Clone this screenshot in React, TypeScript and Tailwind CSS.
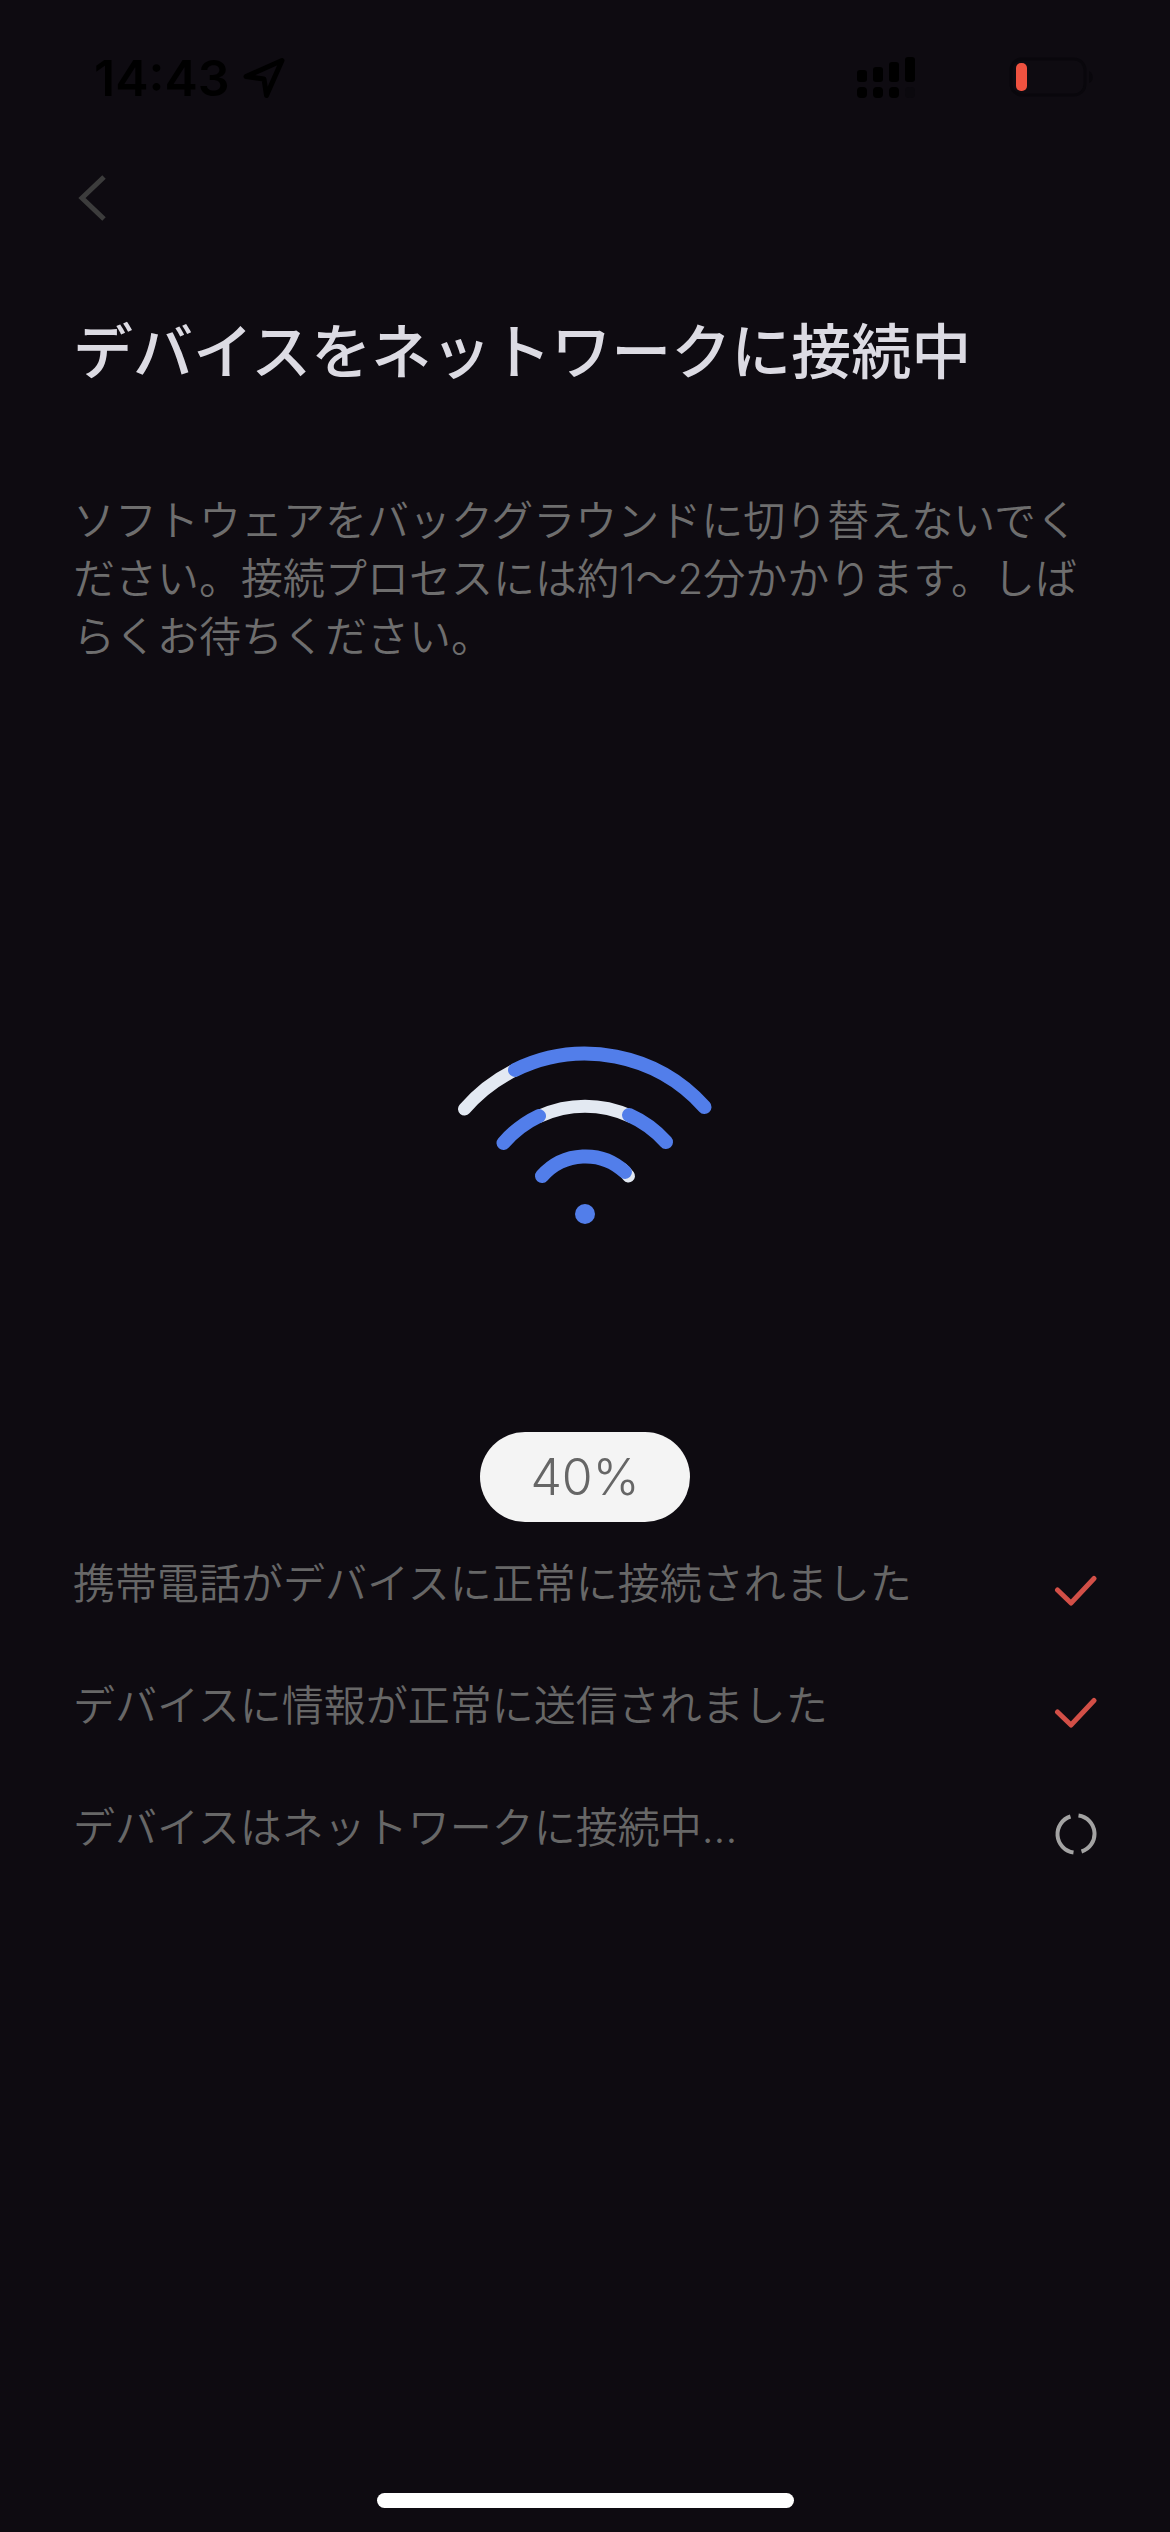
import type { ReactNode } from 'react';

type StepState = 'done' | 'pending';

interface Step {
  id: number;
  label: string;
  state: StepState;
}

const progress = 40;

const steps: Step[] = [
  { id: 1, label: '携帯電話がデバイスに正常に接続されました', state: 'done' },
  { id: 2, label: 'デバイスに情報が正常に送信されました', state: 'done' },
  { id: 3, label: 'デバイスはネットワークに接続中...', state: 'pending' },
];

function LocationIcon() {
  return (
    <svg className="w-11 h-11" viewBox="0 0 44 44" fill="none" aria-hidden="true">
      <path
        d="M4 20.5 L40 4.500 L24.500 39.500 L22 23 Z"
        stroke="#000"
        strokeWidth="5"
        strokeLinejoin="round"
      />
    </svg>
  );
}

function SignalIcon() {
  return (
    <svg className="w-[58px] h-11" viewBox="0 0 58 44" aria-hidden="true">
      <rect x="0" y="14" width="10" height="12" rx="3" />
      <rect x="16" y="11" width="10" height="15" rx="3" />
      <rect x="32" y="6" width="10" height="20" rx="3" />
      <rect x="48" y="1" width="10" height="25" rx="3" />
      <rect x="0" y="31" width="10" height="11" rx="4" />
      <rect x="16" y="31" width="10" height="11" rx="4" />
      <rect x="32" y="31" width="10" height="11" rx="4" />
      <rect x="48" y="31" width="10" height="11" rx="4" fill="#0b090e" />
    </svg>
  );
}

function BatteryIcon() {
  return (
    <svg className="w-[84px] h-11" viewBox="0 0 84 44" fill="none" aria-hidden="true">
      <rect x="2" y="3" width="74" height="36" rx="11" stroke="#09070c" strokeWidth="3" />
      <path d="M80 15 C85 18 85 25 80 27 Z" fill="#09070c" />
      <rect x="7" y="7" width="11" height="28" rx="5" fill="#ef5240" />
    </svg>
  );
}

function StatusBar() {
  return (
    <div className="flex items-center h-[156px] pl-[94px] pr-[77px]">
      <span className="text-[50px] leading-none font-semibold text-black">14:43</span>
      <span className="ml-3">
        <LocationIcon />
      </span>
      <span className="ml-auto">
        <SignalIcon />
      </span>
      <span className="ml-[94px]">
        <BatteryIcon />
      </span>
    </div>
  );
}

function WifiAnimation() {
  return (
    <svg
      className="w-[260px] h-[185px]"
      viewBox="455 1045 260 185"
      fill="none"
      strokeWidth="14"
      strokeLinecap="round"
      role="img"
      aria-label="接続中"
    >
      <g stroke="#e3e9f2" strokeWidth="13">
        <path d="M464.500 1110 A160 160 0 0 1 515 1071" />
        <path d="M540 1117 A108 108 0 0 1 630 1117" />
        <path d="M622 1170 A58 58 0 0 1 628.500 1177" />
      </g>
      <g stroke="#527eea">
        <path d="M515 1071 A160 160 0 0 1 704.500 1108" />
        <path d="M503.500 1144 A108 108 0 0 1 539 1117" />
        <path d="M629 1116 A108 108 0 0 1 666 1143" />
        <path d="M542 1177 A58 58 0 0 1 625 1173" />
      </g>
      <circle cx="585" cy="1215" r="10" fill="#527eea" />
    </svg>
  );
}

function CheckIcon() {
  return (
    <svg className="w-11 h-11" viewBox="0 0 44 44" fill="none" aria-hidden="true">
      <path
        d="M4.500 21 L18 34 L41 9.500"
        stroke="#d24f47"
        strokeWidth="5"
        strokeLinecap="round"
        strokeLinejoin="round"
      />
    </svg>
  );
}

function SpinnerIcon() {
  return (
    <svg className="w-11 h-11" viewBox="0 0 44 44" fill="none" aria-hidden="true">
      <g stroke="#a3a3a3" strokeWidth="4">
        <path d="M17.500 3.500 A18.500 18.500 0 0 0 20.500 39.500" />
        <path d="M25.500 2.500 A18.500 18.500 0 0 1 28.500 38.500" />
      </g>
    </svg>
  );
}

const stepIcons: Record<StepState, ReactNode> = {
  done: <CheckIcon />,
  pending: <SpinnerIcon />,
};

export default function App() {
  return (
    <div
      lang="ja"
      className="flex flex-col min-h-screen bg-[#0e0b11] font-['Inter','Noto_Sans_CJK_JP',sans-serif]"
    >
      <StatusBar />

      <header className="flex items-center h-[84px] px-[72px]">
        <button type="button" aria-label="戻る" className="w-11 h-[52px]">
          <svg className="w-11 h-[52px]" viewBox="0 0 44 52" fill="none" aria-hidden="true">
            <path d="M32 5 L10 26 L32 47" stroke="#3c3c3c" strokeWidth="5" />
          </svg>
        </button>
      </header>

      <main className="flex flex-col px-[73px]">
        <h1 className="mt-[72px] text-6xl leading-[80px] font-medium text-[#dcdbe3]">
          デバイスをネットワークに接続中
        </h1>
        <p className="mt-[100px] text-[42px] leading-[58px] font-[350] text-[#6e6e6e]">
          ソフトウェアをバックグラウンドに切り替えないでください。接続プロセスには約1〜2分かかります。しばらくお待ちください。
        </p>

        <div className="flex justify-center mt-[378px]">
          <WifiAnimation />
        </div>

        <div
          role="status"
          className="self-center flex items-center justify-center mt-[203px] w-[210px] h-[90px] rounded-full bg-[#f4f4f4] text-[50px] font-[350] text-[#666666]"
        >
          {progress}%
        </div>

        <ul className="flex flex-col gap-16 mt-[33px]">
          {steps.map((step) => (
            <li key={step.id} className="flex items-end justify-between">
              <span className="text-[42px] leading-[58px] font-[350] text-[#676767]">
                {step.label}
              </span>
              {stepIcons[step.state]}
            </li>
          ))}
        </ul>
      </main>

      <div className="self-center mt-auto mb-6 w-[417px] h-[15px] rounded-full bg-white" />
    </div>
  );
}
